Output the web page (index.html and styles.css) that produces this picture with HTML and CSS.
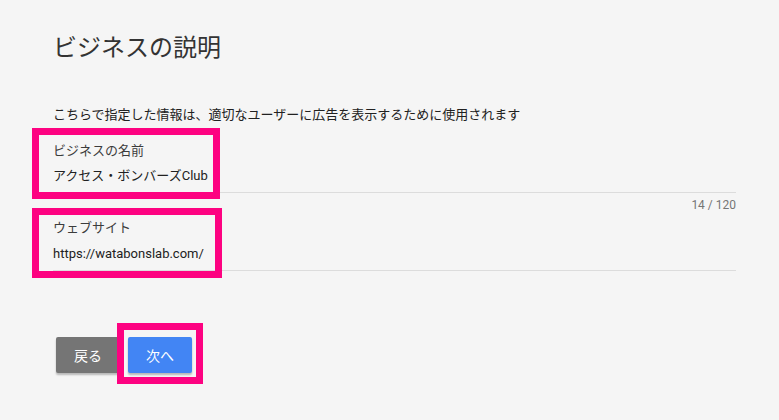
FILE: index.html
```html
<!DOCTYPE html>
<html lang="ja">
<head>
    <meta charset="UTF-8">
    <meta name="viewport" content="width=device-width, initial-scale=1.0">
    <title>ビジネスの説明</title>
    <link rel="stylesheet" href="styles.css">
</head>
<body>
    <div class="page">
        <h1 class="title">ビジネスの説明</h1>

        <p class="intro">こちらで指定した情報は、適切なユーザーに広告を表示するために使用されます</p>

        <div class="field first">
            <div class="field-label">ビジネスの名前</div>
            <div class="field-value">アクセス・ボンバーズClub</div>
            <div class="mark mark-name"></div>
        </div>
        <div class="counter">14 / 120</div>

        <div class="field second">
            <div class="field-label">ウェブサイト</div>
            <div class="field-value">https://watabonslab.com/</div>
            <div class="mark mark-site"></div>
        </div>

        <div class="actions">
            <button class="btn back">戻る</button>
            <div class="next-frame">
                <button class="btn next">次へ</button>
            </div>
        </div>
    </div>
</body>
</html>
```

FILE: styles.css
```css
html, body {
    height: 100%;
}

body {
    margin: 0;
    background-color: #f5f5f5;
    font-family: Roboto, "Noto Sans CJK JP", sans-serif;
    color: #212121;
}

.page {
    box-sizing: border-box;
    min-height: 100%;
    padding: 32px 43px 36px 53px;
}

.title {
    margin: 0;
    font-size: 24px;
    line-height: 32px;
    font-weight: normal;
    color: #333;
}

.intro {
    margin: 41px 0 0;
    font-size: 13px;
    line-height: 20px;
}

.field {
    position: relative;
    padding-bottom: 6px;
    border-bottom: 1px solid #dcdcdc;
}

.field.first {
    margin-top: 16px;
}

.field.second {
    margin-top: 5px;
}

.field-label {
    font-size: 13px;
    line-height: 20px;
    color: #3c3c3c;
}

.field-value {
    margin-top: 5px;
    font-size: 13px;
    line-height: 20px;
}

.second .field-value {
    margin-top: 6px;
}

.counter {
    margin-top: 4px;
    text-align: right;
    font-size: 12px;
    line-height: 16px;
    color: #757575;
}

.actions {
    display: flex;
    align-items: flex-start;
    margin-top: 66px;
    margin-left: 3px;
}

.btn {
    display: block;
    width: 64px;
    height: 36px;
    padding: 0;
    border: none;
    border-radius: 2px;
    color: white;
    font-family: inherit;
    font-size: 14px;
    box-shadow: 0 2px 2px rgba(0, 0, 0, 0.25);
    cursor: pointer;
}

.back { background-color: #757575; }
.next { background-color: #4285f4; }

/* annotation frames */
.mark {
    position: absolute;
    border: 7px solid #fd0281;
    box-sizing: border-box;
}

.mark-name {
    left: -21px;
    top: -13px;
    width: 188px;
    height: 71px;
}

.mark-site {
    left: -21px;
    top: -10px;
    width: 190px;
    height: 70px;
}

.next-frame {
    border: 7px solid #fd0281;
    padding: 7px 4px 4px 4px;
    margin: -14px 0 -11px -3px;
}
```
